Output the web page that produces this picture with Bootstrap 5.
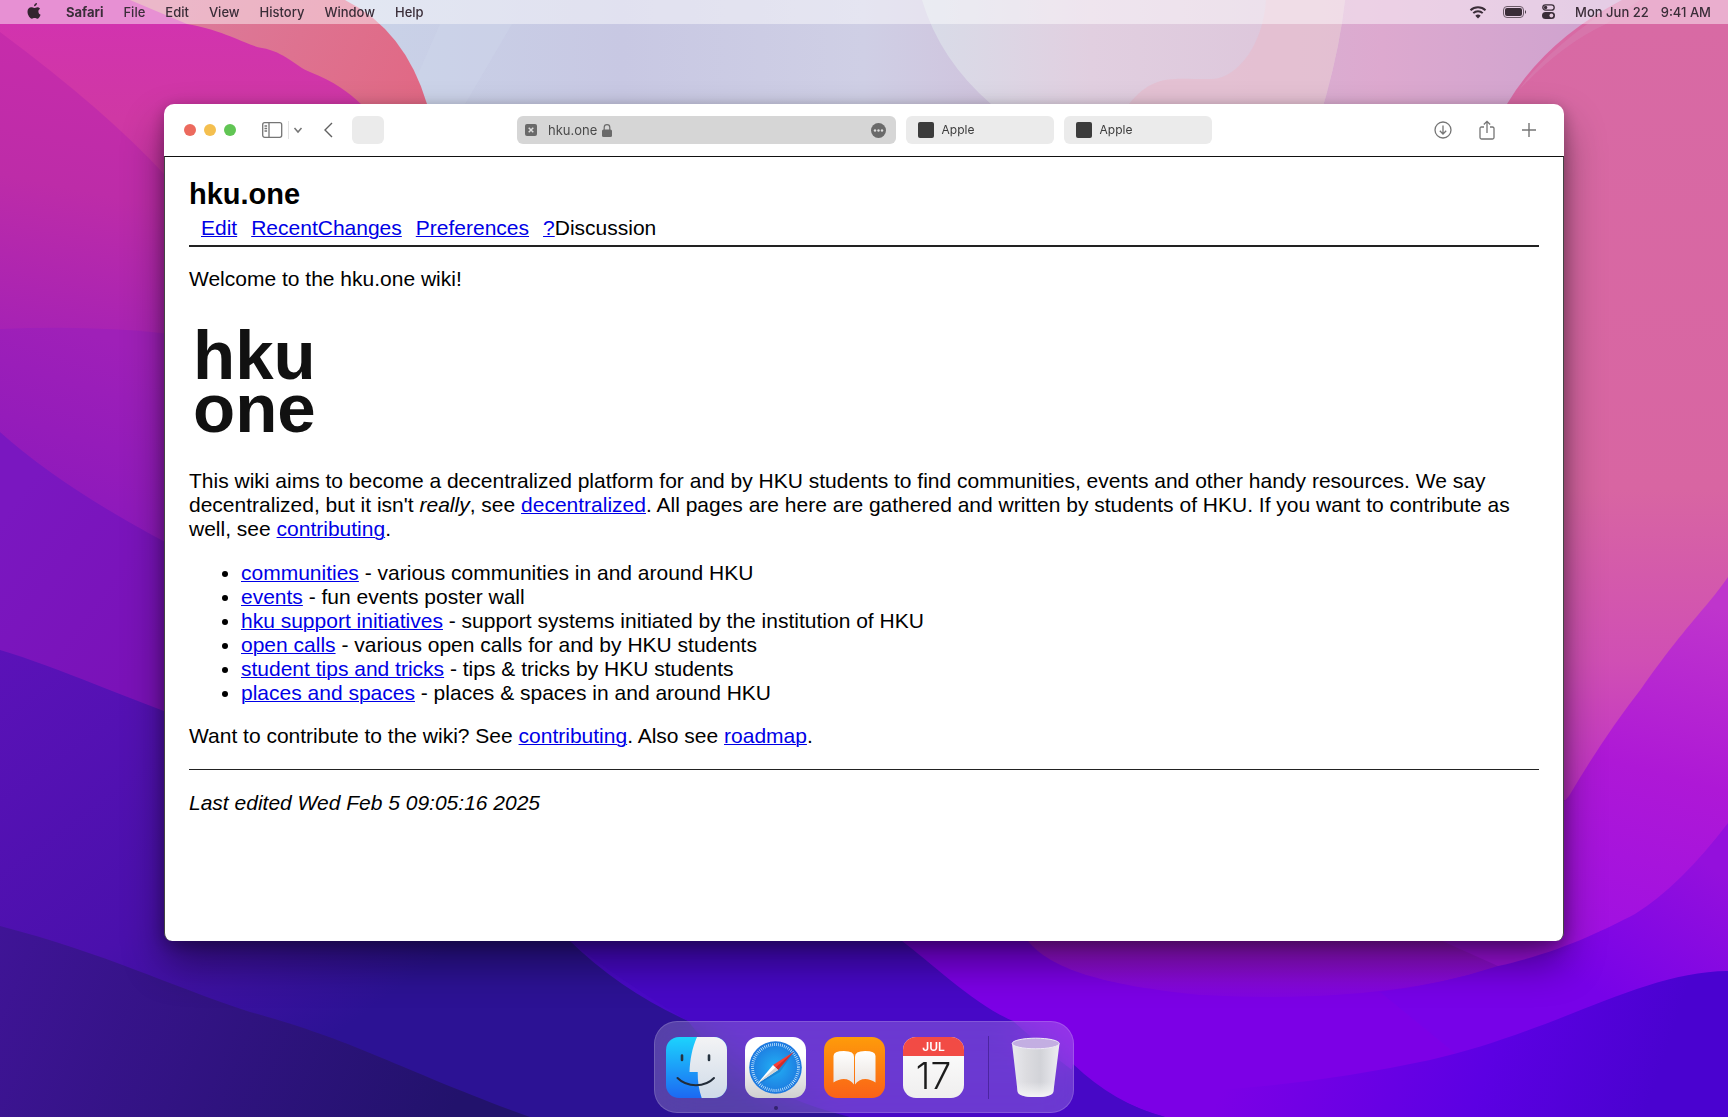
<!DOCTYPE html>
<html lang="en">
<head>
<meta charset="utf-8">
<meta name="viewport" content="width=device-width, initial-scale=1">
<title>hku.one</title>
<link href="https://cdn.jsdelivr.net/npm/bootstrap@5.3.0/dist/css/bootstrap.min.css" rel="stylesheet">
<style>
body { font-family: Inter, "Liberation Sans", sans-serif; background: #5512b2; color: #000; }
.wallpaper { position: fixed; inset: 0; width: 100%; height: 100%; z-index: -1; }
.plain { border: 0; background: none; padding: 0; color: inherit; display: block; }
.plain svg, .menubar svg, .dock svg { display: block; }
.menubar { height: 24px; padding: 0 17px 1px 26px; font-size: 13px; line-height: 22px; font-weight: 500; color: #3a2d38; background: rgba(255,255,255,.46); }
.menubar .menu { gap: 20px; }
.menubar a { color: inherit; text-decoration: none; }
.menubar .battery { margin-right: 15px; }
.stage { padding: 80px 164px; }
.browser { border-radius: 10px; box-shadow: 0 22px 40px rgba(0,0,0,.42), 0 4px 16px rgba(0,0,0,.3); }
.toolbar { height: 52px; padding: 0 28px 0 20px; background: #fff; border-radius: 10px 10px 0 0; color: #757575; }
.light { width: 12px; height: 12px; border-radius: 50%; }
.light-close { background: #ec6a5e; }
.light-min { background: #f4bf4f; }
.light-max { background: #61c554; }
.rule-v { width: 1px; height: 18px; background: #e2e2e2; }
.back { margin-left: 20px; }
.chip { height: 28px; border-radius: 6px; background: #ebebeb; color: #3c3c3c; font-size: 12px; line-height: 28px; flex-shrink: 0; }
.chip-blank { width: 32px; margin-left: 19px; }
.chip-tab { width: 148px; margin-left: 10px; padding: 0 12px; }
.favicon { width: 16px; height: 16px; border-radius: 2px; background: #3c3c3c; }
.address { width: 28%; margin-left: 133px; padding: 0 10px 0 8px; background: #d6d6d6; color: #6a6a6a; }
.address input { width: 50px; margin-left: 11px; font-size: 13px; line-height: 28px; color: #4a4a4a; }
.tools { gap: 27px; }
.wiki { padding: 21px 24px; background: #fff; border: solid #444; border-width: 1px 1px 0; border-top-color: #111; border-radius: 0 0 8px 8px; font-family: "Liberation Sans", Arial, sans-serif; font-size: 21px; line-height: 24px; }
.wiki h1 { font-size: 29px; line-height: 32px; font-weight: 700; margin: 0 0 6px; }
.wiki a { color: #0000e6; text-decoration: underline; text-decoration-thickness: 1px; }
.wiki nav { padding-left: 12px; gap: 14px; }
.wiki hr { margin: 5px 0 20px; border: 0; border-top: 2px solid #222; opacity: 1; }
.wiki .wordmark { margin: 38px 0 32px; padding-left: 4px; height: 108px; font-size: 69px; line-height: 53px; font-weight: 700; color: #111; }
.wiki ul { margin: 20px 0 19px; padding-left: 52px; }
.wiki p { margin: 0; }
.wiki .foot-rule { margin: 21px 0; border-top-width: 1px; }
.dock { margin-bottom: 4px; height: 92px; padding: 0 11px; border-radius: 23px; background: rgba(255,255,255,.2); border: 1px solid rgba(255,255,255,.16); backdrop-filter: blur(20px); }
.dock .apps { gap: 18px; }
.dock .divide { width: 1px; height: 63px; margin: 0 16px 0 24px; background: rgba(30,10,90,.4); }
.running { position: absolute; left: 50%; bottom: -12px; width: 4px; height: 4px; margin-left: -2px; border-radius: 50%; background: #33236e; }
</style>
<script src="https://cdn.jsdelivr.net/npm/bootstrap@5.3.0/dist/js/bootstrap.bundle.min.js"></script>
</head>
<body class="d-flex flex-column min-vh-100">
<svg class="wallpaper" viewBox="0 0 1728 1117" preserveAspectRatio="none" aria-hidden="true">
  <defs>
    <linearGradient id="sky" x1="0" x2="1"><stop offset="0.2" stop-color="#c9d3e8"/><stop offset=".36" stop-color="#c8c8e3"/><stop offset=".5" stop-color="#cfcfe5"/><stop offset=".62" stop-color="#d0bcd8"/><stop offset=".8" stop-color="#dda9cf"/><stop offset=".92" stop-color="#cfa3cf"/></linearGradient>
    <linearGradient id="petal" x1="0" x2="1"><stop offset="0" stop-color="#d8dce8"/><stop offset=".4" stop-color="#e1cfe0"/><stop offset="1" stop-color="#dcc4da"/></linearGradient>
    <linearGradient id="coral" x1="0" x2="1" y1="0" y2=".5"><stop offset=".3" stop-color="#db7c9c"/><stop offset="1" stop-color="#e2647f"/></linearGradient>
    <linearGradient id="rose" gradientUnits="userSpaceOnUse" x1="0" y1="24" x2="0" y2="340"><stop offset="0" stop-color="#d233ae"/><stop offset=".3" stop-color="#cf38a4"/><stop offset="1" stop-color="#b52ba9"/></linearGradient>
    <linearGradient id="plum" gradientUnits="userSpaceOnUse" x1="60" y1="30" x2="0" y2="330"><stop offset="0" stop-color="#c72cab"/><stop offset=".5" stop-color="#bd2ca8"/><stop offset="1" stop-color="#a622b4"/></linearGradient>
    <linearGradient id="violet" gradientUnits="userSpaceOnUse" x1="60" y1="325" x2="0" y2="520"><stop offset="0" stop-color="#9f20b8"/><stop offset="1" stop-color="#8b18bc"/></linearGradient>
    <linearGradient id="grape" gradientUnits="userSpaceOnUse" x1="0" y1="520" x2="160" y2="640"><stop offset="0" stop-color="#7a17c0"/><stop offset="1" stop-color="#7a12b8"/></linearGradient>
    <linearGradient id="indigo" gradientUnits="userSpaceOnUse" x1="0" y1="650" x2="300" y2="1060"><stop offset="0" stop-color="#5b12b8"/><stop offset=".6" stop-color="#4a10ac"/><stop offset="1" stop-color="#2c1294"/></linearGradient>
    <linearGradient id="ink" gradientUnits="userSpaceOnUse" x1="0" y1="930" x2="450" y2="1117"><stop offset="0" stop-color="#3f1496"/><stop offset="1" stop-color="#22126c"/></linearGradient>
    <linearGradient id="pinkr" gradientUnits="userSpaceOnUse" x1="0" y1="24" x2="0" y2="800"><stop offset="0" stop-color="#d86aa4"/><stop offset=".6" stop-color="#d865a2"/><stop offset=".82" stop-color="#d04fb4"/><stop offset="1" stop-color="#c030c8"/></linearGradient>
    <linearGradient id="fuchsia" gradientUnits="userSpaceOnUse" x1="1690" y1="600" x2="1600" y2="940"><stop offset="0" stop-color="#bf35cc"/><stop offset=".5" stop-color="#ae18d6"/><stop offset="1" stop-color="#a010e2"/></linearGradient>
    <linearGradient id="elec" gradientUnits="userSpaceOnUse" x1="1700" y1="860" x2="1610" y2="1000"><stop offset="0" stop-color="#9410dc"/><stop offset="1" stop-color="#7702e8"/></linearGradient>
    <linearGradient id="glow" gradientUnits="userSpaceOnUse" x1="0" y1="930" x2="0" y2="998"><stop offset="0" stop-color="#a016c4"/><stop offset="1" stop-color="#8004e2"/></linearGradient>
    <linearGradient id="deep" gradientUnits="userSpaceOnUse" x1="1250" y1="1000" x2="1640" y2="1130"><stop offset="0" stop-color="#7c00e6"/><stop offset=".6" stop-color="#5c00e3"/><stop offset="1" stop-color="#4a02d0"/></linearGradient>
  </defs>
  <rect width="1728" height="1117" fill="#4a0ac8"/>
  <rect width="1728" height="500" fill="url(#sky)"/>
  <path d="M440 24 405 104H465L512 24Z" fill="#cfd8ea" opacity=".4"/>
  <path d="M922 0Q940 60 991 104L1100 200H1290Q1335 90 1345 0Z" fill="url(#petal)"/>
  <path d="M1266 0C1264 40 1240 78 1212 79C1175 80 1155 72 1129 104V200H1290Q1335 90 1345 0Z" fill="#e6bdcf" opacity=".75"/>
  <path d="M1622 0Q1545 40 1507 104L1440 300V900H1728V0Z" fill="url(#pinkr)"/>
  <path d="M1622 0Q1545 50 1519 90Q1562 44 1606 24L1640 0Z" fill="#d888b6" opacity=".4"/>
  <path d="M0 0H345Q405 30 427 104V500H0Z" fill="url(#coral)"/>
  <path d="M0 0H130L187 24C230 32 245 45 262 48C285 52 295 66 310 72C335 82 348 92 361 104V500H0Z" fill="url(#rose)"/>
  <path d="M0 32Q105 110 165 175V500H0Z" fill="url(#plum)"/>
  <path d="M0 329Q110 324 200 338V700H0Z" fill="url(#violet)"/>
  <path d="M0 432Q70 495 200 560V760H0Z" fill="url(#grape)"/>
  <path d="M0 650C60 668 130 700 200 724L570 941Q620 990 688 1021L850 1117H0Z" fill="url(#indigo)"/>
  <path d="M570 941L500 700H1100V1117H850Q740 1090 688 1021Q620 980 570 941Z" fill="#4708c6"/>
  <path d="M0 926C110 955 165 984 250 1012C360 1042 400 1070 530 1117H0Z" fill="url(#ink)"/>
  <path d="M902 941C930 962 975 1005 1013 1021C1080 1080 1110 1100 1165 1117H1728V800H902Z" fill="#7c00e6"/>
  <path d="M1028 941C1050 968 1100 985 1200 995C1350 1003 1440 985 1500 966L1600 800H1028Z" fill="url(#glow)"/>
  <path d="M1728 577C1705 610 1690 620 1641 689Q1605 735 1569 796L1440 940L1498 966H1728Z" fill="url(#fuchsia)"/>
  <path d="M1728 823Q1680 886 1635 914C1600 932 1560 952 1498 966Q1440 985 1380 992L1500 1090H1728Z" fill="url(#elec)"/>
  <path d="M1728 971C1640 972 1560 1030 1430 1060Q1290 1090 1150 1093L1165 1117H1728Z" fill="url(#deep)"/>
  <path d="M1073 1064Q1115 1104 1165 1117H1060Z" fill="#4708c6"/>
</svg>

<header class="menubar d-flex align-items-center justify-content-between">
  <nav class="menu d-flex align-items-center" aria-label="Menu bar">
    <button class="plain" aria-label="Apple menu"><svg width="16" height="17" viewBox="0 0 16 17" fill="#33242f"><path d="M11 0c.1 1.600-1.300 3.300-3 3.300C7.800 1.700 9.400.2 11 0zM14 5.700c-1.200.8-1.700 1.800-1.600 3 .1 1.500.9 2.500 2.200 3-.7 2-2 4-3.300 4-1 0-1.400-.6-2.700-.6s-1.800.6-2.700.6C4 15.700 1.500 12 1.500 8.800c0-2.800 1.700-4.500 3.700-4.500 1.200 0 2.100.7 3 .7.800 0 1.900-.8 3.300-.8 1 0 1.900.5 2.500 1.500z"/></svg></button>
    <a class="fw-bold ms-1" href="#">Safari</a><a href="#">File</a><a href="#">Edit</a><a href="#">View</a><a href="#">History</a><a href="#">Window</a><a href="#">Help</a>
  </nav>
  <div class="d-flex align-items-center">
    <svg width="18" height="14" viewBox="0 0 18 14" fill="none" stroke="#3a2d38" stroke-width="2"><path d="M1.500 5.200a10.800 10.800 0 0 1 15 0M4.300 8.100a6.800 6.800 0 0 1 9.400 0"/><path d="M9 13.500 6.300 10.700a4 4 0 0 1 5.400 0z" fill="#3a2d38" stroke="none"/></svg>
    <svg class="battery ms-3" width="24" height="12" viewBox="0 0 24 12"><rect x=".5" y=".5" width="20" height="11" rx="3.500" fill="none" stroke="#6b5a68"/><rect x="2" y="2" width="17" height="8" rx="2" fill="#3a2d38"/><path d="M22 4q2 2 0 4z" fill="#3a2d38"/></svg>
    <svg width="13" height="15" viewBox="0 0 13 15"><rect x=".8" y=".8" width="11.400" height="5.400" rx="2.700" fill="none" stroke="#3a2d38" stroke-width="1.300"/><circle cx="3.600" cy="3.500" r="1.700" fill="#3a2d38"/><rect y="8" width="13" height="7" rx="3.500" fill="#3a2d38"/><circle cx="9.400" cy="11.500" r="1.900" fill="#e5cade"/></svg>
    <span class="ms-3 ps-1 me-2">Mon Jun 22</span><span class="ps-1">9:41 AM</span>
  </div>
</header>

<main class="stage flex-grow-1 d-flex">
  <section class="browser flex-grow-1 d-flex flex-column">
    <div class="toolbar d-flex align-items-center">
      <div class="d-flex gap-2">
        <button class="plain light light-close" aria-label="Close"></button>
        <button class="plain light light-min" aria-label="Minimise"></button>
        <button class="plain light light-max" aria-label="Zoom"></button>
      </div>
      <button class="plain ms-4 me-1" aria-label="Sidebar"><svg width="24" height="18" viewBox="0 0 24 18" fill="none" stroke="currentColor" stroke-width="1.300"><rect x="2.700" y="1.700" width="19" height="14.600" rx="2"/><path d="M9 2v14M4.500 5h2.600M4.500 7.500h2.600M4.500 10h2.600"/></svg></button>
      <span class="rule-v"></span>
      <button class="plain ms-1" aria-label="Tab groups"><svg width="10" height="8" viewBox="0 0 10 8" fill="none" stroke="currentColor" stroke-width="1.500"><path d="M1.500 2 5 6l3.500-4"/></svg></button>
      <button class="plain back" aria-label="Back"><svg width="10" height="16" viewBox="0 0 10 16" fill="none" stroke="#606060" stroke-width="1.400"><path d="M9 1 2 8l7 7"/></svg></button>
      <button class="plain chip chip-blank" aria-label="Forward"></button>
      <div class="chip address d-flex align-items-center">
        <button class="plain" aria-label="Close tab"><svg width="12" height="12" viewBox="0 0 12 12"><rect width="12" height="12" rx="2" fill="#6a6a6a"/><path d="M3.700 3.700l4.600 4.600M8.300 3.700 3.700 8.300" stroke="#ddd" stroke-width="1.500"/></svg></button>
        <input class="plain" type="text" value="hku.one" aria-label="Address">
        <svg class="ms-1" width="10" height="13" viewBox="0 0 10 13"><rect y="5.500" width="10" height="7.500" rx="1.500" fill="#6a6a6a"/><path d="M2.200 6V3.500a2.800 2.800 0 0 1 5.600 0V6" fill="none" stroke="#6a6a6a" stroke-width="1.200"/></svg>
        <button class="plain ms-auto" aria-label="More"><svg width="15" height="15" viewBox="0 0 15 15" fill="#dedede"><circle cx="7.500" cy="7.500" r="7.500" fill="#6a6a6a"/><circle cx="4" cy="7.500" r="1.200"/><circle cx="7.500" cy="7.500" r="1.200"/><circle cx="11" cy="7.500" r="1.200"/></svg></button>
      </div>
      <button class="plain chip chip-tab d-flex align-items-center"><span class="favicon me-2"></span>Apple</button>
      <button class="plain chip chip-tab d-flex align-items-center"><span class="favicon me-2"></span>Apple</button>
      <div class="tools d-flex align-items-center ms-auto">
        <button class="plain" aria-label="Downloads"><svg width="18" height="18" viewBox="0 0 18 18" fill="none" stroke="currentColor" stroke-width="1.300"><circle cx="9" cy="9" r="8"/><path d="M9 4.500v8.500M5.800 9.800 9 13l3.200-3.200"/></svg></button>
        <button class="plain" aria-label="Share"><svg width="16" height="20" viewBox="0 0 16 20" fill="none" stroke="currentColor" stroke-width="1.300"><path d="M5 7H2.500Q1 7 1 8.500v9Q1 19 2.500 19h11q1.500 0 1.500-1.500v-9Q15 7 13.500 7H11M8 13V1.500M4.800 4.500 8 1.300l3.200 3.200"/></svg></button>
        <button class="plain" aria-label="New tab"><svg width="14" height="14" viewBox="0 0 14 14" stroke="currentColor" stroke-width="1.400"><path d="M7 0v14M0 7h14"/></svg></button>
      </div>
    </div>
    <article class="wiki flex-grow-1">
      <h1>hku.one</h1>
      <nav class="d-flex" aria-label="Wiki"><a href="#">Edit</a><a href="#">RecentChanges</a><a href="#">Preferences</a><span><a href="#">?</a>Discussion</span></nav>
      <hr>
      <p>Welcome to the hku.one wiki!</p>
      <div class="wordmark">hku<br>one</div>
      <p>This wiki aims to become a decentralized platform for and by HKU students to find communities, events and other handy resources. We say decentralized, but it isn't <em>really</em>, see <a href="#">decentralized</a>. All pages are here are gathered and written by students of HKU. If you want to contribute as well, see <a href="#">contributing</a>.</p>
      <ul>
        <li><a href="#">communities</a> - various communities in and around HKU</li>
        <li><a href="#">events</a> - fun events poster wall</li>
        <li><a href="#">hku support initiatives</a> - support systems initiated by the institution of HKU</li>
        <li><a href="#">open calls</a> - various open calls for and by HKU students</li>
        <li><a href="#">student tips and tricks</a> - tips &amp; tricks by HKU students</li>
        <li><a href="#">places and spaces</a> - places &amp; spaces in and around HKU</li>
      </ul>
      <p>Want to contribute to the wiki? See <a href="#">contributing</a>. Also see <a href="#">roadmap</a>.</p>
      <hr class="foot-rule">
      <p><em>Last edited Wed Feb 5 09:05:16 2025</em></p>
    </article>
  </section>
</main>

<footer class="dock align-self-center d-flex align-items-center">
  <div class="apps d-flex">
    <button class="plain" aria-label="Finder"><svg width="61" height="61" viewBox="0 0 61 61">
      <defs><linearGradient id="f1" x2="0" y2="1"><stop stop-color="#1cd3fd"/><stop offset="1" stop-color="#1c69f3"/></linearGradient><linearGradient id="f2" x2="0" y2="1"><stop stop-color="#f3f3f5"/><stop offset="1" stop-color="#cfdbe8"/></linearGradient><clipPath id="fc"><rect width="61" height="61" rx="13"/></clipPath></defs>
      <g clip-path="url(#fc)"><rect width="61" height="61" fill="url(#f1)"/><path d="M31 0C26 11 24 23 23.500 35h8.200q-.2 14 4 26H61V0Z" fill="url(#f2)"/></g>
      <path d="M16 18.500v4.500M43 18.500v4.500" stroke="#263340" stroke-width="2.600" stroke-linecap="round"/><path d="M11.500 41c9.500 9.500 27.500 9.500 36.500 0" fill="none" stroke="#222c38" stroke-width="2" stroke-linecap="round"/></svg></button>
    <button class="plain position-relative" aria-label="Safari"><svg width="61" height="61" viewBox="0 0 61 61">
      <defs><linearGradient id="s1" x2="0" y2="1"><stop offset=".3" stop-color="#fff"/><stop offset="1" stop-color="#d0d0d0"/></linearGradient><radialGradient id="s2"><stop stop-color="#22b0f5"/><stop offset="1" stop-color="#1d78df"/></radialGradient></defs>
      <rect width="61" height="61" rx="13" fill="url(#s1)"/><circle cx="30.500" cy="30.500" r="26.300" fill="url(#s2)"/><circle cx="30.500" cy="30.500" r="23" fill="none" stroke="#d5efff" stroke-width="3" stroke-dasharray=".7 1.307"/>
      <path d="M14 47 49 15 35 35Z" fill="#1368b8" opacity=".45"/><path d="M48.500 15 28 28l5 5Z" fill="#fa3f36"/><path d="M48.500 15 30.500 30.500l2.500 2.500Z" fill="#cf2c2c"/><path d="M12.500 46.500 28 28l5 5Z" fill="#fff"/><path d="M12.500 46.500 30.500 30.500l2.500 2.500Z" fill="#d3d3d3"/></svg><span class="running"></span></button>
    <button class="plain" aria-label="Books"><svg width="61" height="61" viewBox="0 0 61 61">
      <defs><linearGradient id="b1" x2="0" y2="1"><stop stop-color="#fe9b0a"/><stop offset="1" stop-color="#fa6218"/></linearGradient><linearGradient id="b2" x2="0" y2="1"><stop stop-color="#fff"/><stop offset="1" stop-color="#e9e3df"/></linearGradient></defs>
      <rect width="61" height="61" rx="13" fill="url(#b1)"/><path d="M30 47.500C26 41 17 40 9.500 45.500V19Q9.500 14 20 14T30 20ZM31 47.500C35 41 44 40 51.500 45.500V19Q51.500 14 41 14T31 20Z" fill="url(#b2)"/></svg></button>
    <button class="plain" aria-label="Calendar"><svg width="61" height="61" viewBox="0 0 61 61">
      <defs><linearGradient id="c1" x2="0" y2="1"><stop stop-color="#fff"/><stop offset="1" stop-color="#efeeee"/></linearGradient></defs>
      <rect width="61" height="61" rx="13" fill="url(#c1)"/><path d="M0 19V13A13 13 0 0 1 13 0H48A13 13 0 0 1 61 13V19Z" fill="#f24b45"/>
      <text x="30.500" y="14" text-anchor="middle" font-family="Inter, sans-serif" font-size="12" font-weight="600" fill="#fff">JUL</text>
      <text x="30.500" y="52" text-anchor="middle" font-family="Inter, sans-serif" font-size="37" font-weight="300" fill="#1c1c1c">17</text></svg></button>
  </div>
  <span class="divide"></span>
  <button class="plain" aria-label="Trash"><svg width="57" height="61" viewBox="0 0 57 61">
    <defs><linearGradient id="t1"><stop stop-color="#e9e9ee"/><stop offset=".3" stop-color="#dcdce0"/><stop offset=".6" stop-color="#d2d3d8"/><stop offset="1" stop-color="#ededf2"/></linearGradient><linearGradient id="t2" x2="0" y2="1"><stop stop-color="#f4f4f6" stop-opacity="0"/><stop offset="1" stop-color="#f4f4f6"/></linearGradient></defs>
    <path d="M7 6.500 12.500 54Q13 60 30.500 60T48.500 54L54.500 6.500Z" fill="url(#t1)"/><path d="M11.500 45 12.500 54Q13 60 30.500 60T48.500 54L49.500 45Z" fill="url(#t2)"/><ellipse cx="30.700" cy="6.500" rx="23.500" ry="5.300" fill="#c3aee2" stroke="#eeeaf6" stroke-width="1"/></svg></button>
</footer>
</body>
</html>
